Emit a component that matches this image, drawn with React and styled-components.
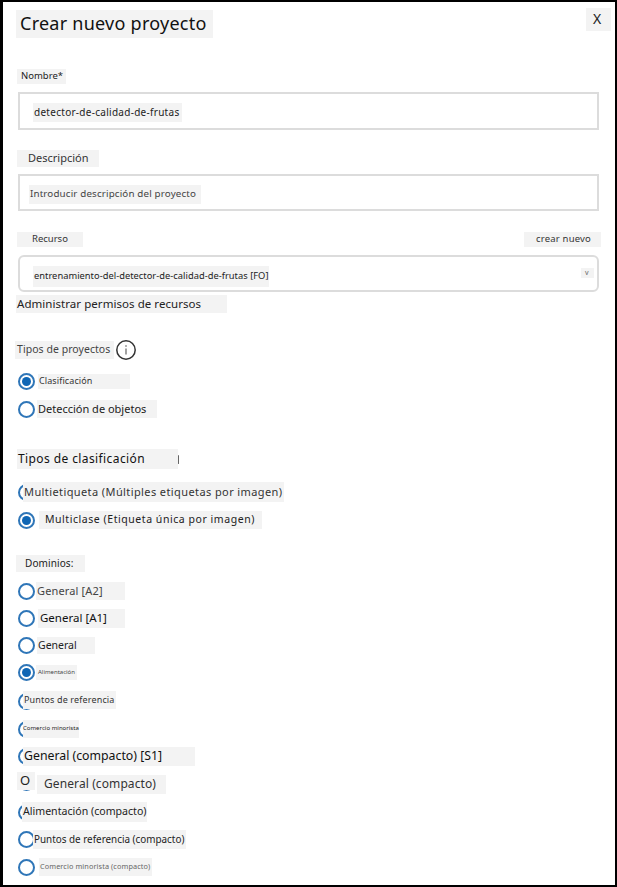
import React from "react";
import styled, { createGlobalStyle } from "styled-components";

const GlobalStyle = createGlobalStyle`
  html, body {
    margin: 0;
    padding: 0;
    background: #fff;
  }
  * {
    box-sizing: border-box;
  }
`;

const Frame = styled.div`
  width: 617px;
  height: 887px;
  overflow: hidden;
  padding: 0 4px 0 13px;
  background: #fff;
  border-style: solid;
  border-color: #000;
  border-width: 2px 2px 2px 3px;
  font-family: "Noto Sans", "Open Sans", sans-serif;
`;

const Patch = styled.span`
  display: flex;
  flex-shrink: 0;
  align-items: center;
  width: ${(p) => p.$w}px;
  height: ${(p) => p.$h}px;
  margin-left: ${(p) => p.$left || 0}px;
  margin-top: ${(p) => p.$top || 0}px;
  padding-left: ${(p) => p.$pad || 0}px;
  padding-bottom: 2px;
  background: #f3f3f3;
  color: ${(p) => p.$color || "#222"};
  font-size: ${(p) => p.$size}px;
  letter-spacing: ${(p) => p.$track || 0}px;
  white-space: nowrap;
`;

const Header = styled.div`
  display: flex;
  justify-content: space-between;
  align-items: flex-start;
  height: 30px;
  margin-top: 6px;
`;

const Row = styled.div`
  display: flex;
  align-items: ${(p) => p.$align || "center"};
  height: ${(p) => p.$h}px;
  margin-top: ${(p) => p.$mt}px;
`;

const SplitRow = styled(Row)`
  justify-content: space-between;
  padding-right: 10px;
`;

const FieldBox = styled.div`
  display: flex;
  justify-content: space-between;
  align-items: flex-start;
  width: 581px;
  height: ${(p) => p.$h}px;
  margin-top: ${(p) => p.$mt}px;
  margin-left: 2px;
  padding: 9px 3px 0 ${(p) => p.$pad}px;
  border: 2px solid #dcdcdc;
  border-radius: ${(p) => p.$radius || 0}px;
  background: #fff;
`;

const RadioRing = styled.span`
  display: flex;
  flex-shrink: 0;
  align-items: center;
  justify-content: center;
  width: 17px;
  height: 17px;
  margin-left: 2px;
  margin-top: ${(p) => p.$drop || 0}px;
  border: 2px solid #2f76b8;
  border-radius: 50%;
  background: #fff;
`;

const RadioDot = styled.span`
  width: 9px;
  height: 9px;
  border-radius: 50%;
  background: #0f66b5;
`;

const StrayMark = styled.span`
  width: 1px;
  height: 9px;
  background: #666;
  border-radius: 1px;
`;

const InfoIcon = () => (
  <svg width="22" height="22" viewBox="0 0 22 22" style={{ marginLeft: 1 }}>
    <circle cx="11" cy="11" r="9.2" fill="#fff" stroke="#333" strokeWidth="1.5" />
    <line x1="11" y1="9.5" x2="11" y2="15.5" stroke="#555" strokeWidth="1.1" />
    <circle cx="11" cy="7" r="0.8" fill="#555" />
  </svg>
);

const Option = ({ mt, h, checked, drop, left, w, pad, size, color, track, children }) => (
  <Row $mt={mt} $h={h}>
    <RadioRing $drop={drop}>{checked && <RadioDot />}</RadioRing>
    <Patch $left={left} $w={w} $h={h} $pad={pad} $size={size} $color={color} $track={track}>
      {children}
    </Patch>
  </Row>
);

export default function App() {
  return (
    <>
      <GlobalStyle />
      <Frame>
        <Header>
          <Patch $top={2} $w={197} $h={28} $pad={4} $size={18} $color="#111" $track={0.25}>
            Crear nuevo proyecto
          </Patch>
          <Patch $w={25} $h={23} $pad={7} $size={14} $color="#222">
            X
          </Patch>
        </Header>

        <Row $mt={31} $h={15}>
          <Patch $left={1} $w={49} $h={15} $pad={4} $size={9.5}>
            Nombre*
          </Patch>
        </Row>
        <FieldBox $mt={8} $h={38} $pad={13}>
          <Patch $w={149} $h={19} $pad={1} $size={10} $track={0.28}>
            detector-de-calidad-de-frutas
          </Patch>
        </FieldBox>

        <Row $mt={20} $h={17}>
          <Patch $left={1} $w={82} $h={17} $pad={11} $size={11} $color="#333">
            Descripción
          </Patch>
        </Row>
        <FieldBox $mt={7} $h={37} $pad={9}>
          <Patch $w={172} $h={19} $pad={1} $size={9.8} $color="#444" $track={0.15}>
            Introducir descripción del proyecto
          </Patch>
        </FieldBox>

        <SplitRow $mt={20} $h={16}>
          <Patch $left={1} $w={66} $h={15} $pad={15} $size={9.5} $color="#333">
            Recurso
          </Patch>
          <Patch $top={1} $w={77} $h={15} $pad={12} $size={9.5} $color="#333" $track={0.2}>
            crear nuevo
          </Patch>
        </SplitRow>
        <FieldBox $mt={8} $h={37} $pad={13} $radius={6}>
          <Patch $w={236} $h={21} $pad={1} $size={9.3} $track={0.03}>
            entrenamiento-del-detector-de-calidad-de-frutas [FO]
          </Patch>
          <Patch $top={2} $w={13} $h={10} $pad={4} $size={7} $color="#666">
            v
          </Patch>
        </FieldBox>
        <Row $mt={3} $h={18}>
          <Patch $w={211} $h={18} $pad={1} $size={11.5} $track={0.05}>
            Administrar permisos de recursos
          </Patch>
        </Row>

        <Row $mt={27} $h={19}>
          <Patch $left={-1} $w={99} $h={18} $pad={2} $size={10.5} $color="#444" $track={0.05}>
            Tipos de proyectos
          </Patch>
          <InfoIcon />
        </Row>
        <Option mt={15} h={15} checked left={3} w={92} pad={1} size={9} color="#333" track={0.1}>
          Clasificación
        </Option>
        <Option mt={11} h={18} left={2} w={120} pad={1} size={11}>
          Detección de objetos
        </Option>

        <Row $mt={31} $h={20}>
          <Patch $left={1} $w={161} $h={20} $pad={1} $size={12} $color="#111" $track={0.4}>
            Tipos de clasificación
          </Patch>
          <StrayMark />
        </Row>
        <Option mt={13} h={20} left={-12} w={261} pad={1} size={11} color="#333" track={0.4}>
          Multietiqueta (Múltiples etiquetas por imagen)
        </Option>
        <Option mt={9} h={18} checked left={4} w={223} pad={6} size={10.5} color="#222" track={0.55}>
          Multiclase (Etiqueta única por imagen)
        </Option>

        <Row $mt={26} $h={17}>
          <Patch $w={69} $h={17} $pad={9} $size={10} $track={0.1}>
            Dominios:
          </Patch>
        </Row>
        <Option mt={10} h={18} left={1} w={89} pad={1} size={11} color="#444" track={0.15}>
          General [A2]
        </Option>
        <Option mt={9} h={19} left={3} w={87} pad={2} size={11.5} color="#111">
          General [A1]
        </Option>
        <Option mt={9} h={17} left={2} w={58} pad={1} size={10.5}>
          General
        </Option>
        <Option mt={11} h={15} checked left={1} w={41} pad={2} size={6} color="#444">
          Alimentación
        </Option>
        <Option mt={11} h={18} drop={3} left={-12} w={93} pad={1} size={9} color="#333" track={0.15}>
          Puntos de referencia
        </Option>
        <Option mt={11} h={18} left={-12} w={56} size={6} color="#222" track={0.03}>
          Comercio minorista
        </Option>
        <Option mt={9} h={19} left={-12} w={172} pad={1} size={12.3} color="#111">
          General (compacto) [S1]
        </Option>
        <Row $mt={6} $h={22} $align="flex-start">
          <RadioRing $drop={2} />
          <Patch $left={-18} $w={18} $h={18} $pad={3} $size={13} $color="#222">
            O
          </Patch>
          <Patch $left={2} $top={3} $w={129} $h={19} $pad={7} $size={12} $color="#333" $track={0.1}>
            General (compacto)
          </Patch>
        </Row>
        <Option mt={8} h={20} left={-13} w={125} pad={1} size={10.6} color="#222">
          Alimentación (compacto)
        </Option>
        <Option mt={8} h={19} left={-2} w={153} pad={1} size={9.9} color="#222">
          Puntos de referencia (compacto)
        </Option>
        <Option mt={9} h={18} left={4} w={113} pad={1} size={7.3} color="#666" track={0.1}>
          Comercio minorista (compacto)
        </Option>
      </Frame>
    </>
  );
}
